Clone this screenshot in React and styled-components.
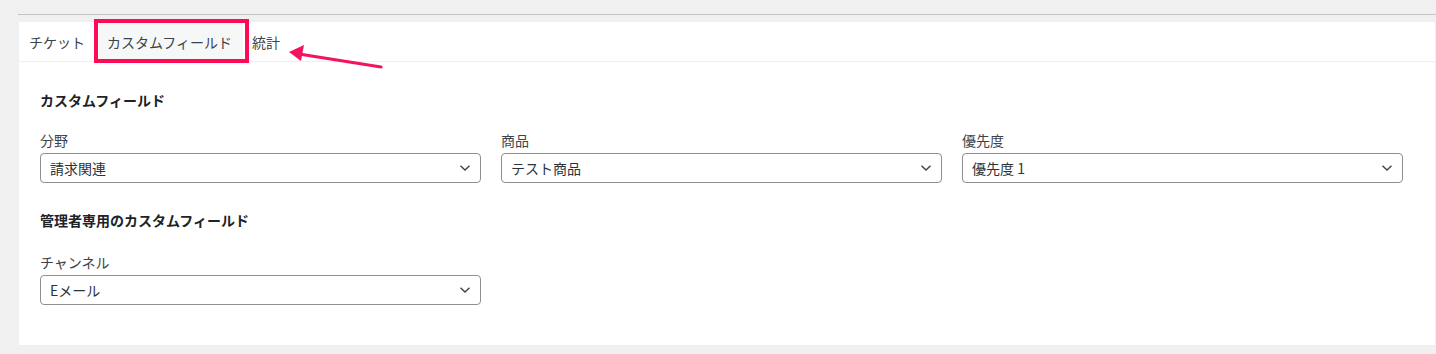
import React from 'react'
import styled, { createGlobalStyle } from 'styled-components'

const font = `"Noto Sans CJK JP", "Noto Sans", "Liberation Sans", sans-serif`

const GlobalStyle = createGlobalStyle`
  html, body {
    margin: 0;
    padding: 0;
    background: #f0f0f1;
    font-family: ${font};
  }
`

const Page = styled.div`
  padding: 14px 0 0 18px;
`

const TopRule = styled.div`
  height: 1px;
  background: #c3c4c7;
`

const Panel = styled.div`
  position: relative;
  margin: 7px 1px 0 1px;
  background: #fff;
  padding-bottom: 40px;
`

const TabBar = styled.div`
  display: flex;
  height: 39px;
  padding-left: 2px;
  border-bottom: 1px solid #f0f0f1;
`

const Tab = styled.div`
  display: flex;
  align-items: center;
  padding: 0 8px;
  margin-right: ${({ $active }) => ($active ? '0' : '4px')};
  font-size: 14px;
  color: #3c434a;
  background: ${({ $active }) => ($active ? '#f6f7f7' : 'transparent')};
  &:nth-child(2) { margin-left: 2px; width: 128px; }
  &:nth-child(3) { margin-left: 9px; padding: 0; }
`

const Highlight = styled.div`
  position: absolute;
  left: 75px;
  top: -3px;
  width: 147px;
  height: 36px;
  border: 4px solid #ff0a55;
  pointer-events: none;
`

const Arrow = styled.svg`
  position: absolute;
  left: 262px;
  top: 20px;
  overflow: visible;
`

const Body = styled.div`
  padding: 0 32px 0 21px;
`

const Heading = styled.h2`
  margin: ${({ $first }) => ($first ? '28px' : '27px')} 0 0;
  font-size: 14px;
  line-height: 20px;
  font-weight: 700;
  color: #1d2327;
`

const FieldGrid = styled.div`
  display: grid;
  grid-template-columns: repeat(3, 1fr);
  column-gap: 20px;
  margin-top: ${({ $gap }) => $gap}px;
`

const Field = styled.div`
  display: flex;
  flex-direction: column;
`

const Label = styled.label`
  font-size: 14px;
  line-height: 20px;
  color: #3c434a;
  margin-bottom: 3px;
`

const SelectBox = styled.div`
  display: flex;
  align-items: center;
  justify-content: space-between;
  height: 30px;
  box-sizing: border-box;
  border: 1px solid #8c8f94;
  border-radius: 4px;
  padding: 0 9px 0 9px;
  font-size: 14px;
  color: #2c3338;
  background: #fff;
`

const Chevron = () => (
  <svg width="12" height="8" viewBox="0 0 12 8">
    <path d="M1.5 1.8 L6 6 L10.5 1.8" fill="none" stroke="#3c434a" strokeWidth="1.4" />
  </svg>
)

const Select = ({ label, value }) => (
  <Field>
    <Label>{label}</Label>
    <SelectBox>
      <span>{value}</span>
      <Chevron />
    </SelectBox>
  </Field>
)

export default function App() {
  return (
    <>
      <GlobalStyle />
      <Page>
        <TopRule />
        <Panel>
          <TabBar>
            <Tab>チケット</Tab>
            <Tab $active>カスタムフィールド</Tab>
            <Tab>統計</Tab>
          </TabBar>
          <Highlight />
          <Arrow width="110" height="30" viewBox="0 0 110 30">
            <path d="M100 25 L18 12" stroke="#f2145e" strokeWidth="3.2" strokeLinecap="round" fill="none" />
            <path d="M8 10 L23 3 L20 19 Z" fill="#f2145e" />
          </Arrow>
          <Body>
            <Heading $first>カスタムフィールド</Heading>
            <FieldGrid $gap={20}>
              <Select label="分野" value="請求関連" />
              <Select label="商品" value="テスト商品" />
              <Select label="優先度" value="優先度 1" />
            </FieldGrid>
            <Heading>管理者専用のカスタムフィールド</Heading>
            <FieldGrid $gap={22}>
              <Select label="チャンネル" value="Eメール" />
            </FieldGrid>
          </Body>
        </Panel>
      </Page>
    </>
  )
}
